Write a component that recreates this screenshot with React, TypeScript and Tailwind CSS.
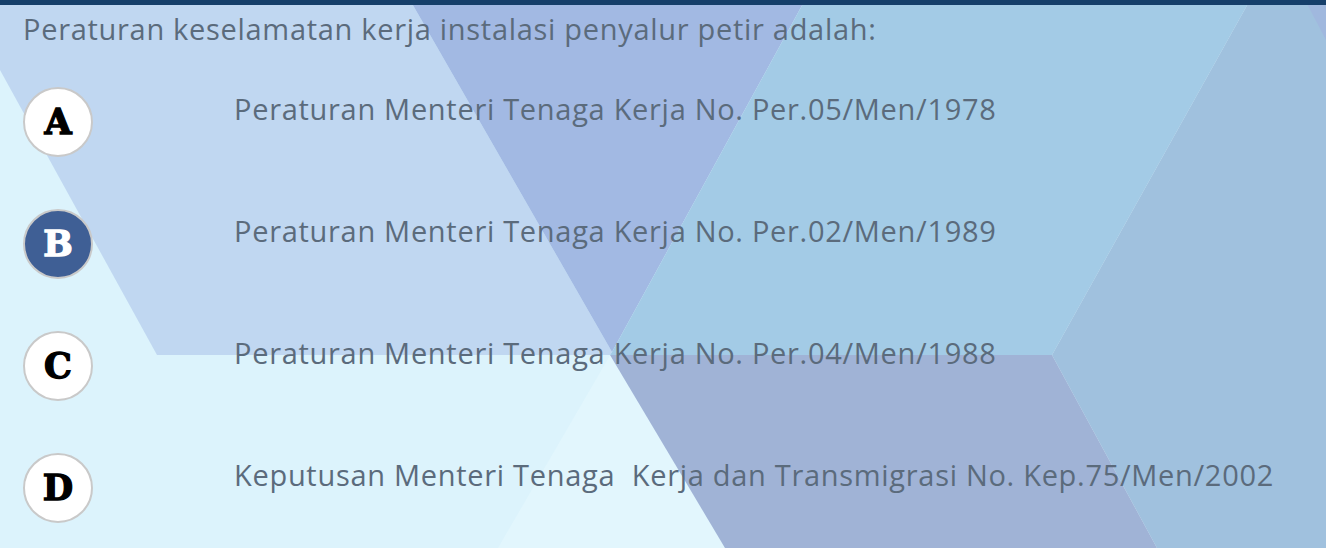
const options = [
  { key: "A", text: "Peraturan Menteri Tenaga Kerja No. Per.05/Men/1978", selected: false },
  { key: "B", text: "Peraturan Menteri Tenaga Kerja No. Per.02/Men/1989", selected: true },
  { key: "C", text: "Peraturan Menteri Tenaga Kerja No. Per.04/Men/1988", selected: false },
  { key: "D", text: "Keputusan Menteri Tenaga  Kerja dan Transmigrasi No. Kep.75/Men/2002", selected: false },
];

function Backdrop() {
  return (
    <svg
      className="absolute inset-0 w-full h-full"
      viewBox="0 0 1326 548"
      preserveAspectRatio="none"
    >
      <rect x="0" y="0" width="1326" height="548" fill="#dcf3fc" />
      <polygon points="612,352 725,548 498,548" fill="#e2f6fd" />
      <polygon points="0,0 410,0 612,352 610,355 157,355 0,70" fill="#c0d7f1" />
      <polygon points="410,0 805,0 612,352" fill="#a2b9e3" />
      <polygon points="805,0 1250,0 1052,355 610,355 612,352" fill="#a3cbe6" />
      <polygon points="1250,0 1326,0 1326,548 1157,548 1052,355" fill="#a0c1de" />
      <polygon points="1305,0 1326,0 1326,40" fill="#a0b8de" />
      <polygon points="610,355 1052,355 1157,548 725,548" fill="#a0b3d6" />
    </svg>
  );
}

export default function App() {
  return (
    <main className="relative w-[1326px] h-[548px] overflow-hidden font-['Open_Sans',sans-serif] text-[#5b6b7c]">
      <Backdrop />

      {/* Top bar */}
      <div className="relative h-[5px] bg-[#163f6a]" />

      <div className="relative px-[23px]">
        <p className="pt-[6px] text-[29px] leading-[36px] tracking-[0.7px] whitespace-nowrap">
          Peraturan keselamatan kerja instalasi penyalur petir adalah:
        </p>

        <ul className="mt-[40px]">
          {options.map((o) => (
            <li key={o.key} className="flex items-start h-[122px]">
              <div
                className={
                  o.selected
                    ? "w-[70px] h-[70px] shrink-0 rounded-full border-2 border-[#c9c9c9] bg-[#3f5f95] text-white flex items-center justify-center font-['DejaVu_Serif',serif] font-bold text-[35px] [-webkit-text-stroke:1.3px_white]"
                    : "w-[70px] h-[70px] shrink-0 rounded-full border-2 border-[#c9c9c9] bg-white text-black flex items-center justify-center font-['DejaVu_Serif',serif] font-bold text-[35px] [-webkit-text-stroke:1.3px_black]"
                }
              >
                {o.key}
              </div>
              <span className="ml-[141px] mt-[4px] text-[29px] leading-[36px] tracking-[0.7px] whitespace-pre">
                {o.text}
              </span>
            </li>
          ))}
        </ul>
      </div>
    </main>
  );
}
